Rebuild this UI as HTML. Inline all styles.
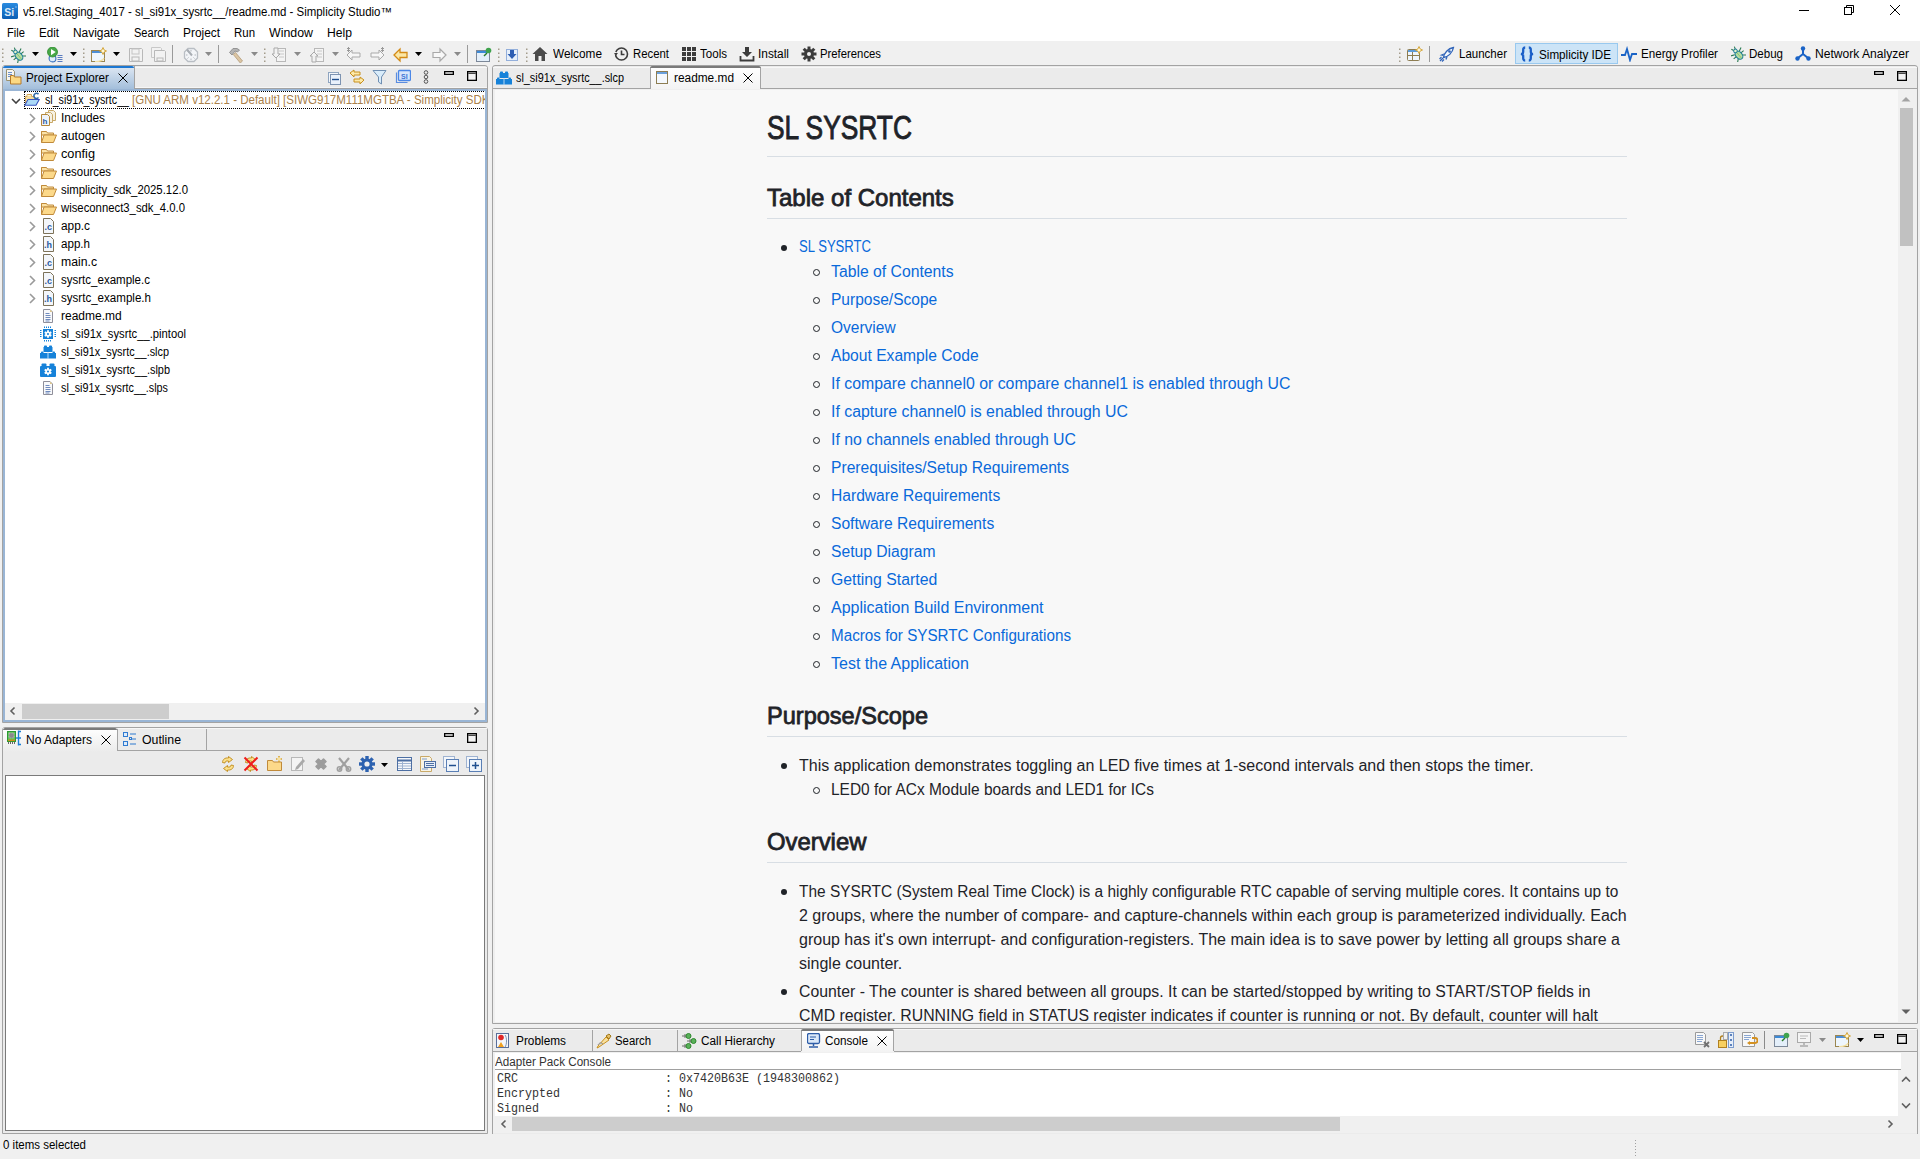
<!DOCTYPE html>
<html><head><meta charset="utf-8"><title>Simplicity Studio</title>
<style>
html,body{margin:0;padding:0}
body{width:1920px;height:1159px;overflow:hidden;background:#f0f0f0;position:relative;font-family:"Liberation Sans",sans-serif}
div,span,svg{position:absolute;box-sizing:border-box}
.t{white-space:pre;line-height:0;transform-origin:0 0}
.clip{overflow:hidden}
</style></head><body>
<div style="left:0px;top:0px;width:1920px;height:41px;background:#ffffff;"></div>
<svg style="left:2px;top:3px" width="16" height="16" viewBox="0 0 16 16"><defs><linearGradient id="sig" x1="0" y1="0" x2="0" y2="1"><stop offset="0" stop-color="#2a8be0"/><stop offset="1" stop-color="#0d5fb4"/></linearGradient></defs><rect x="0" y="0" width="16" height="16" rx="1.5" fill="url(#sig)"/><text x="2.2" y="13.2" font-size="10.5" font-family="Liberation Sans" font-weight="bold" fill="#dce9f6">Si</text><circle cx="14" cy="4" r=".8" fill="#8fc0ee"/></svg>
<span class="t" style="left:23px;top:12px;font-size:12px;font-family:'Liberation Sans',sans-serif;color:#000;transform:scaleX(0.9537);">v5.rel.Staging_4017 - sl_si91x_sysrtc__/readme.md - Simplicity Studio™</span>
<svg style="left:1799px;top:9px" width="11" height="3" viewBox="0 0 11 3"><rect width="10" height="1" y="1" fill="#000"/></svg>
<svg style="left:1844px;top:5px" width="12" height="12" viewBox="0 0 12 12"><rect x="0.5" y="2.5" width="7" height="7" fill="none" stroke="#000"/><path d="M2.5 2.5V0.5h7v7h-2" fill="none" stroke="#000"/></svg>
<svg style="left:1890px;top:5px" width="11" height="11" viewBox="0 0 11 11"><path d="M0 0l10 10M10 0 0 10" stroke="#000" stroke-width="1"/></svg>
<span class="t" style="left:7px;top:33px;font-size:12px;font-family:'Liberation Sans',sans-serif;color:#000;transform:scaleX(0.9305);">File</span>
<span class="t" style="left:39px;top:33px;font-size:12px;font-family:'Liberation Sans',sans-serif;color:#000;transform:scaleX(0.9669);">Edit</span>
<span class="t" style="left:73px;top:33px;font-size:12px;font-family:'Liberation Sans',sans-serif;color:#000;transform:scaleX(0.9921);">Navigate</span>
<span class="t" style="left:134px;top:33px;font-size:12px;font-family:'Liberation Sans',sans-serif;color:#000;transform:scaleX(0.9204);">Search</span>
<span class="t" style="left:183px;top:33px;font-size:12px;font-family:'Liberation Sans',sans-serif;color:#000;transform:scaleX(0.9905);">Project</span>
<span class="t" style="left:234px;top:33px;font-size:12px;font-family:'Liberation Sans',sans-serif;color:#000;transform:scaleX(0.9537);">Run</span>
<span class="t" style="left:269px;top:33px;font-size:12px;font-family:'Liberation Sans',sans-serif;color:#000;transform:scaleX(1.0307);">Window</span>
<span class="t" style="left:327px;top:33px;font-size:12px;font-family:'Liberation Sans',sans-serif;color:#000;transform:scaleX(1.0127);">Help</span>
<svg style="left:1px;top:47px" width="16" height="16" viewBox="0 0 16 16"><rect x="1" y="1.5" width="1.5" height="1.5" fill="#a39c8c"/><rect x="1" y="5.5" width="1.5" height="1.5" fill="#a39c8c"/><rect x="1" y="9.5" width="1.5" height="1.5" fill="#a39c8c"/><rect x="1" y="13.5" width="1.5" height="1.5" fill="#a39c8c"/></svg>
<svg style="left:10px;top:47px" width="16" height="16" viewBox="0 0 16 16"><g transform="rotate(-40 8 8)"><g stroke="#2a7a52" stroke-width="1.1" fill="none"><path d="M5 6.5 1.5 5M5 9 1.5 9M5.5 11.5 2.5 14M11 6.5l3.5-1.5M11 9h3.5M10.5 11.5l3 2.5M7 2.5 6 0M9 2.5l1-2.5"/></g><ellipse cx="8" cy="9.5" rx="3.2" ry="4.6" fill="#b7dca0" stroke="#1f7f9a" stroke-width="1.1"/><path d="M8 5.5v8" stroke="#7fbf70" stroke-width=".8"/><circle cx="8" cy="4" r="1.8" fill="#e8f4c8" stroke="#1f7f9a" stroke-width="1"/></g></svg>
<svg style="left:32px;top:52px" width="7" height="4" viewBox="0 0 7 4"><path d="M0 0h7l-3.5 4z" fill="#000"/></svg>
<svg style="left:47px;top:47px" width="16" height="16" viewBox="0 0 16 16"><circle cx="5.5" cy="11.5" r="3.4" fill="#e0eefa" stroke="#3b73c0" stroke-width="1.1"/><path d="M10.5 8.5h5M10.5 10.5h5M10.5 12.5h5M10.5 14.5h5" stroke="#5a7cc0" stroke-width="1"/><circle cx="5.5" cy="5" r="5" fill="#47a847" stroke="#2e8a2e" stroke-width=".8"/><path d="M4 2v6.2l4.7-3.1z" fill="#fff"/></svg>
<svg style="left:70px;top:52px" width="7" height="4" viewBox="0 0 7 4"><path d="M0 0h7l-3.5 4z" fill="#000"/></svg>
<svg style="left:82px;top:47px" width="16" height="16" viewBox="0 0 16 16"><rect x="1" y="1.5" width="1.5" height="1.5" fill="#a39c8c"/><rect x="1" y="5.5" width="1.5" height="1.5" fill="#a39c8c"/><rect x="1" y="9.5" width="1.5" height="1.5" fill="#a39c8c"/><rect x="1" y="13.5" width="1.5" height="1.5" fill="#a39c8c"/></svg>
<svg style="left:91px;top:47px" width="16" height="16" viewBox="0 0 16 16"><rect x="0.5" y="3.5" width="13" height="11" fill="#eef6fd" stroke="#9b8650"/><rect x="1" y="4" width="12" height="2" fill="#4d8fd6"/><path d="M13 11c-1 3-5 3.5-9 3.5" fill="none" stroke="#f3dfa0" stroke-width="1.2"/><path d="M12 0.5 13.2 3 15.5 4 13.2 5 12 7.5 10.8 5 8.5 4 10.8 3z" fill="#fff8d8" stroke="#d3a02e" stroke-width=".9"/></svg>
<svg style="left:113px;top:52px" width="7" height="4" viewBox="0 0 7 4"><path d="M0 0h7l-3.5 4z" fill="#000"/></svg>
<svg style="left:128px;top:47px" width="16" height="16" viewBox="0 0 16 16"><path d="M1.5 1.5h12l1 1v12h-13z" fill="#f2f2f2" stroke="#b8b8b8"/><rect x="4" y="2" width="7" height="5" fill="none" stroke="#c4c4c4"/><rect x="4" y="10" width="7" height="4" fill="none" stroke="#b8b8b8"/></svg>
<svg style="left:151px;top:47px" width="16" height="16" viewBox="0 0 16 16"><path d="M0.5 0.5h9l1 1v9h-10z" fill="#f2f2f2" stroke="#c8c8c8"/><path d="M3.5 3.5h10l1 1v10h-11z" fill="#f2f2f2" stroke="#b8b8b8"/><rect x="6" y="11" width="6" height="3" fill="none" stroke="#b8b8b8"/></svg>
<div style="left:172px;top:45px;width:1px;height:18px;background:#9a9a9a;"></div>
<svg style="left:183px;top:47px" width="16" height="16" viewBox="0 0 16 16"><path d="M5 1.5h6l3.5 3.5v6L11 14.5H5L1.5 11V5z" fill="#f3f5f8" stroke="#b9bec4" stroke-width="1.3"/><path d="M8 3v1.5M8 11.5V13M3 8h1.5M11.5 8H13M4.5 4.5l1 1M11.5 11.5l-1-1M4.5 11.5l1-1" stroke="#b0b5bb"/><path d="M4 2.5 9 8.5" stroke="#a9aeb4" stroke-width="2"/></svg>
<svg style="left:205px;top:52px" width="7" height="4" viewBox="0 0 7 4"><path d="M0 0h7l-3.5 4z" fill="#8a8a8a"/></svg>
<div style="left:218px;top:45px;width:1px;height:18px;background:#9a9a9a;"></div>
<svg style="left:228px;top:47px" width="16" height="16" viewBox="0 0 16 16"><path d="M1.5 5.5 5 1.5h4l2.5 1.5-2 2L7 4 4 8z" fill="#b4b4b4" stroke="#8c8c8c" stroke-width=".9"/><path d="M7.5 5.5l7 8.5-2.2 2-7-8.5z" fill="#dcc6a4" stroke="#b39a78" stroke-width=".8"/></svg>
<svg style="left:251px;top:52px" width="7" height="4" viewBox="0 0 7 4"><path d="M0 0h7l-3.5 4z" fill="#8a8a8a"/></svg>
<svg style="left:263px;top:47px" width="16" height="16" viewBox="0 0 16 16"><rect x="1" y="1.5" width="1.5" height="1.5" fill="#a39c8c"/><rect x="1" y="5.5" width="1.5" height="1.5" fill="#a39c8c"/><rect x="1" y="9.5" width="1.5" height="1.5" fill="#a39c8c"/><rect x="1" y="13.5" width="1.5" height="1.5" fill="#a39c8c"/></svg>
<svg style="left:271px;top:47px" width="16" height="16" viewBox="0 0 16 16"><rect x="5.5" y="1.5" width="9" height="13" fill="#f4f4f4" stroke="#b8b8b8"/><path d="M8 4h5M8 7h5M8 10h5" stroke="#c8c8c8"/><path d="M3 1v6H1l4 4 4-4H7V1z" fill="#f2f2f2" stroke="#a9a9a9"/></svg>
<svg style="left:294px;top:52px" width="7" height="4" viewBox="0 0 7 4"><path d="M0 0h7l-3.5 4z" fill="#8a8a8a"/></svg>
<svg style="left:309px;top:47px" width="16" height="16" viewBox="0 0 16 16"><rect x="5.5" y="1.5" width="9" height="13" fill="#f4f4f4" stroke="#b8b8b8"/><path d="M8 4h5M8 7h5M8 10h5" stroke="#c8c8c8"/><path d="M3 15V9H1l4-4 4 4H7v6z" fill="#f2f2f2" stroke="#a9a9a9"/></svg>
<svg style="left:332px;top:52px" width="7" height="4" viewBox="0 0 7 4"><path d="M0 0h7l-3.5 4z" fill="#8a8a8a"/></svg>
<svg style="left:346px;top:47px" width="16" height="16" viewBox="0 0 16 16"><path d="M1 8l5-5v3h8v4H6v3z" fill="#f6f6f6" stroke="#a9a9a9"/><path d="M1 1l3 3M1 4l3-3M2.5 0v5" stroke="#999"/></svg>
<svg style="left:369px;top:47px" width="16" height="16" viewBox="0 0 16 16"><path d="M15 8l-5-5v3H2v4h8v3z" fill="#f6f6f6" stroke="#a9a9a9"/><path d="M12 1l3 3M12 4l3-3M13.5 0v5" stroke="#999"/></svg>
<svg style="left:393px;top:47px" width="16" height="16" viewBox="0 0 16 16"><path d="M1 8l6-6v3.5h7v5H7V14z" fill="#fbe7a6" stroke="#d38a16" stroke-width="1.3"/></svg>
<svg style="left:415px;top:52px" width="7" height="4" viewBox="0 0 7 4"><path d="M0 0h7l-3.5 4z" fill="#000"/></svg>
<svg style="left:431px;top:47px" width="16" height="16" viewBox="0 0 16 16"><path d="M15 8l-6-6v3.5H2v5h7V14z" fill="#f8f8f8" stroke="#a9a9a9" stroke-width="1.2"/></svg>
<svg style="left:454px;top:52px" width="7" height="4" viewBox="0 0 7 4"><path d="M0 0h7l-3.5 4z" fill="#8a8a8a"/></svg>
<div style="left:467px;top:45px;width:1px;height:18px;background:#9a9a9a;"></div>
<svg style="left:476px;top:47px" width="16" height="16" viewBox="0 0 16 16"><rect x="0.5" y="3.5" width="13" height="11" fill="#e4effa" stroke="#7c8899"/><rect x="1" y="4" width="12" height="2" fill="#3c8ad6"/><path d="M8 9l3-3" stroke="#2a7a2a" stroke-width="1.5"/><circle cx="12.5" cy="3.5" r="2.8" fill="#3fa34d"/></svg>
<svg style="left:497px;top:47px" width="16" height="16" viewBox="0 0 16 16"><rect x="1" y="1.5" width="1.5" height="1.5" fill="#a39c8c"/><rect x="1" y="5.5" width="1.5" height="1.5" fill="#a39c8c"/><rect x="1" y="9.5" width="1.5" height="1.5" fill="#a39c8c"/><rect x="1" y="13.5" width="1.5" height="1.5" fill="#a39c8c"/></svg>
<svg style="left:504px;top:47px" width="16" height="16" viewBox="0 0 16 16"><rect x="2.5" y="2.5" width="11" height="11" fill="#e6effa" stroke="#3b6fc0" stroke-dasharray="1 1"/><path d="M6 3h4v4h2.5L8 12 3.5 7H6z" fill="#2f5fb3"/></svg>
<svg style="left:525px;top:47px" width="16" height="16" viewBox="0 0 16 16"><rect x="1" y="1.5" width="1.5" height="1.5" fill="#a39c8c"/><rect x="1" y="5.5" width="1.5" height="1.5" fill="#a39c8c"/><rect x="1" y="9.5" width="1.5" height="1.5" fill="#a39c8c"/><rect x="1" y="13.5" width="1.5" height="1.5" fill="#a39c8c"/></svg>
<svg style="left:532px;top:46px" width="16" height="16" viewBox="0 0 16 16"><path d="M8 1 0.5 8H3v7h3.5v-5h3v5H13V8h2.5z" fill="#4a4a4a"/></svg>
<span class="t" style="left:553px;top:54px;font-size:12px;font-family:'Liberation Sans',sans-serif;color:#000;transform:scaleX(0.9838);">Welcome</span>
<svg style="left:613px;top:46px" width="16" height="16" viewBox="0 0 16 16"><circle cx="8.5" cy="8" r="6" fill="none" stroke="#3c3c3c" stroke-width="1.6"/><path d="M8.5 4.5V8.5h3" fill="none" stroke="#3c3c3c" stroke-width="1.6"/><path d="M0 6h4l-2 3z" fill="#f0f0f0"/><path d="M1 7l2 2.5L5 7z" fill="#3c3c3c"/></svg>
<span class="t" style="left:633px;top:54px;font-size:12px;font-family:'Liberation Sans',sans-serif;color:#000;transform:scaleX(0.9466);">Recent</span>
<svg style="left:681px;top:46px" width="16" height="16" viewBox="0 0 16 16"><rect x="1" y="1" width="4" height="4" fill="#3c3c3c"/><rect x="6" y="1" width="4" height="4" fill="#3c3c3c"/><rect x="11" y="1" width="4" height="4" fill="#3c3c3c"/><rect x="1" y="6" width="4" height="4" fill="#3c3c3c"/><rect x="6" y="6" width="4" height="4" fill="#3c3c3c"/><rect x="11" y="6" width="4" height="4" fill="#3c3c3c"/><rect x="1" y="11" width="4" height="4" fill="#3c3c3c"/><rect x="6" y="11" width="4" height="4" fill="#3c3c3c"/><rect x="11" y="11" width="4" height="4" fill="#3c3c3c"/></svg>
<span class="t" style="left:700px;top:54px;font-size:12px;font-family:'Liberation Sans',sans-serif;color:#000;transform:scaleX(0.9635);">Tools</span>
<svg style="left:739px;top:46px" width="16" height="16" viewBox="0 0 16 16"><path d="M6 1h4v5h3l-5 5-5-5h3z" fill="#3c3c3c"/><path d="M1.5 10v4.5h13V10" fill="none" stroke="#3c3c3c" stroke-width="1.8"/></svg>
<span class="t" style="left:758px;top:54px;font-size:12px;font-family:'Liberation Sans',sans-serif;color:#000;transform:scaleX(0.9885);">Install</span>
<svg style="left:801px;top:46px" width="16" height="16" viewBox="0 0 16 16"><g fill="#3c3c3c"><circle cx="8" cy="8" r="5"/><rect x="6.5" y="0.5" width="3" height="4" transform="rotate(0 8 8)"/><rect x="6.5" y="0.5" width="3" height="4" transform="rotate(45 8 8)"/><rect x="6.5" y="0.5" width="3" height="4" transform="rotate(90 8 8)"/><rect x="6.5" y="0.5" width="3" height="4" transform="rotate(135 8 8)"/><rect x="6.5" y="0.5" width="3" height="4" transform="rotate(180 8 8)"/><rect x="6.5" y="0.5" width="3" height="4" transform="rotate(225 8 8)"/><rect x="6.5" y="0.5" width="3" height="4" transform="rotate(270 8 8)"/><rect x="6.5" y="0.5" width="3" height="4" transform="rotate(315 8 8)"/></g><circle cx="8" cy="8" r="2" fill="#f0f0f0"/></svg>
<span class="t" style="left:820px;top:54px;font-size:12px;font-family:'Liberation Sans',sans-serif;color:#000;transform:scaleX(0.9427);">Preferences</span>
<svg style="left:1398px;top:47px" width="16" height="16" viewBox="0 0 16 16"><rect x="1" y="1.5" width="1.5" height="1.5" fill="#a39c8c"/><rect x="1" y="5.5" width="1.5" height="1.5" fill="#a39c8c"/><rect x="1" y="9.5" width="1.5" height="1.5" fill="#a39c8c"/><rect x="1" y="13.5" width="1.5" height="1.5" fill="#a39c8c"/></svg>
<svg style="left:1407px;top:46px" width="16" height="16" viewBox="0 0 16 16"><rect x="0.5" y="3.5" width="12" height="11" rx="1" fill="#eef5fc" stroke="#8d7d52"/><rect x="1" y="4" width="11" height="2" fill="#5b9ad8"/><path d="M1 9.5h11M5.5 6v8" stroke="#8d7d52"/><path d="M12 0.5 13.2 3 15.5 4 13.2 5 12 7.5 10.8 5 8.5 4 10.8 3z" fill="#fff8d8" stroke="#d3a02e" stroke-width=".9"/></svg>
<div style="left:1429px;top:46px;width:1px;height:16px;background:#9a9a9a;"></div>
<svg style="left:1439px;top:46px" width="16" height="16" viewBox="0 0 16 16"><path d="M4.5 11.5C5 7 9 2.5 14.5 1.5 13.5 7 9 11 4.5 11.5z" fill="#f2f7fd" stroke="#2f63b8" stroke-width="1.3"/><circle cx="10.5" cy="5.5" r="1.3" fill="#2f63b8"/><path d="M5 8 2.5 9l2 .5M8 11l-1 2.5.5-2M1 15l3-3M3 15.5l2-2M.5 13l2-2" stroke="#2f63b8" stroke-width="1.2" fill="none"/></svg>
<span class="t" style="left:1459px;top:54px;font-size:12px;font-family:'Liberation Sans',sans-serif;color:#000;transform:scaleX(0.9590);">Launcher</span>
<div style="left:1515px;top:43px;width:103px;height:21px;background:#cce4f7;box-sizing:border-box;border:1px solid #99c9ef;"></div>
<svg style="left:1519px;top:46px" width="16" height="16" viewBox="0 0 16 16"><path d="M6.2 1.5C3.8 1.5 4.2 3.5 4.2 6S2 8 2 8s2.2 0 2.2 2-.4 4.5 2 4.5M9.8 1.5c2.4 0 2 2 2 4.5S14 8 14 8s-2.2 0-2.2 2 .4 4.5-2 4.5" fill="none" stroke="#1a5fc8" stroke-width="2.3"/></svg>
<span class="t" style="left:1539px;top:55px;font-size:12px;font-family:'Liberation Sans',sans-serif;color:#000;transform:scaleX(0.9726);">Simplicity IDE</span>
<svg style="left:1621px;top:46px" width="16" height="16" viewBox="0 0 16 16"><path d="M0 9h4l2-6 3 11 2-6h5" fill="none" stroke="#1a63c6" stroke-width="1.8"/></svg>
<span class="t" style="left:1641px;top:54px;font-size:12px;font-family:'Liberation Sans',sans-serif;color:#000;transform:scaleX(0.9700);">Energy Profiler</span>
<svg style="left:1730px;top:46px" width="16" height="16" viewBox="0 0 16 16"><g transform="rotate(-40 8 8)"><g stroke="#2a7a52" stroke-width="1.1" fill="none"><path d="M5 6.5 1.5 5M5 9 1.5 9M5.5 11.5 2.5 14M11 6.5l3.5-1.5M11 9h3.5M10.5 11.5l3 2.5M7 2.5 6 0M9 2.5l1-2.5"/></g><ellipse cx="8" cy="9.5" rx="3.2" ry="4.6" fill="#b7dca0" stroke="#1f7f9a" stroke-width="1.1"/><path d="M8 5.5v8" stroke="#7fbf70" stroke-width=".8"/><circle cx="8" cy="4" r="1.8" fill="#e8f4c8" stroke="#1f7f9a" stroke-width="1"/></g></svg>
<span class="t" style="left:1749px;top:54px;font-size:12px;font-family:'Liberation Sans',sans-serif;color:#000;transform:scaleX(0.9612);">Debug</span>
<svg style="left:1795px;top:46px" width="16" height="16" viewBox="0 0 16 16"><path d="M8 8V3M8 8l-5 4M8 8l5 4" stroke="#1a63c6" stroke-width="2"/><circle cx="8" cy="2.5" r="2.2" fill="#1a63c6"/><circle cx="2.5" cy="12.5" r="2.2" fill="#1a63c6"/><circle cx="13.5" cy="12.5" r="2.2" fill="#1a63c6"/></svg>
<span class="t" style="left:1815px;top:54px;font-size:12px;font-family:'Liberation Sans',sans-serif;color:#000;transform:scaleX(1.0065);">Network Analyzer</span>
<div style="left:2px;top:65px;width:486px;height:658px;background:#ebebeb;border:1px solid #a3a3a3;border-radius:3px 3px 0 0;"></div>
<div style="left:3px;top:88px;width:484px;height:1px;background:#a3a3a3;"></div>
<div style="left:135px;top:67px;width:352px;height:1px;background:#f7f7f7;"></div>
<div style="left:135px;top:87px;width:352px;height:1px;background:#f6f6f6;"></div>
<div style="left:3px;top:66px;width:131px;height:25px;background:linear-gradient(#dfe8f3,#9ebbd9);"></div>
<div style="left:3px;top:66px;width:131px;height:2px;background:#1d78d2;border-radius:2px 2px 0 0;"></div>
<div style="left:134px;top:66px;width:1px;height:23px;background:#a3a3a3;"></div>
<svg style="left:6px;top:69px" width="16" height="16" viewBox="0 0 16 16"><path d="M0.5 0.5h6l2 2v9h-8z" fill="#f7f5ee" stroke="#9a9270"/><path d="M2 3.5h4M2 5.5h4M2 7.5h3" stroke="#5c86c9" stroke-width=".9"/><path d="M4.5 6.5h3l1 1.5h6.5v7h-10.5z" fill="#fcd983" stroke="#b57b2c"/></svg>
<span class="t" style="left:26px;top:78px;font-size:12px;font-family:'Liberation Sans',sans-serif;color:#000;transform:scaleX(0.9721);">Project Explorer</span>
<svg style="left:118px;top:73px" width="10" height="10" viewBox="0 0 10 10"><path d="M0.5 0.5L9.5 9.5M9.5 0.5L0.5 9.5" stroke="#000" stroke-width="1"/></svg>
<svg style="left:327px;top:71px" width="16" height="16" viewBox="0 0 16 16"><rect x="1.5" y="1.5" width="10" height="10" fill="#f3f6fa" stroke="#8fa5c0"/><rect x="3.5" y="3.5" width="10" height="10" fill="#e9f1fb" stroke="#7d93b1"/><path d="M5 8.5h7" stroke="#1f4f8f" stroke-width="1.4"/></svg>
<svg style="left:349px;top:69px" width="16" height="16" viewBox="0 0 16 16"><path d="M1 4l4-3v2h6v3H5v2z" fill="#fde9a8" stroke="#c8901e"/><path d="M15 11l-4-3v2H5v3h6v2z" fill="#fde9a8" stroke="#c8901e"/></svg>
<svg style="left:372px;top:69px" width="16" height="16" viewBox="0 0 16 16"><path d="M1 1.5h13L9.5 8v7l-3-2V8z" fill="#d9ecfa" stroke="#6f8fb3"/></svg>
<svg style="left:395px;top:69px" width="16" height="16" viewBox="0 0 16 16"><path d="M1.5 3.5v10h11" fill="none" stroke="#5b8de0" stroke-width="1.2"/><rect x="3.5" y="1.5" width="12" height="10" rx="1" fill="#d7e6fb" stroke="#4b87e6" stroke-width="1.3"/><text x="6" y="10" font-size="7" font-family="Liberation Sans" font-weight="bold" fill="#3b77d6">SI</text></svg>
<svg style="left:423px;top:70px" width="16" height="16" viewBox="0 0 16 16"><circle cx="3" cy="2.5" r="1.8" fill="none" stroke="#555"/><circle cx="3" cy="7" r="1.8" fill="none" stroke="#555"/><circle cx="3" cy="11.5" r="1.8" fill="none" stroke="#555"/></svg>
<svg style="left:444px;top:71px" width="11" height="5" viewBox="0 0 11 5"><rect x="0.65" y="0.65" width="8.7" height="2.7" fill="#fff" stroke="#000" stroke-width="1.3"/></svg>
<svg style="left:467px;top:71px" width="11" height="11" viewBox="0 0 11 11"><rect x="0.65" y="0.65" width="8.7" height="8.7" fill="#f2f2f2" stroke="#000" stroke-width="1.3"/><path d="M1.3 2.3h7.4" stroke="#000" stroke-width=".9"/></svg>
<div style="left:3px;top:89px;width:484px;height:633px;background:#99b5d5;"></div>
<div style="left:5px;top:91px;width:480px;height:629px;background:#ffffff;"></div>
<div style="left:5px;top:703px;width:480px;height:17px;background:#f0f0f0;"></div>
<div style="left:22px;top:704px;width:147px;height:15px;background:#cdcdcd;"></div>
<svg style="left:9px;top:706px" width="8" height="10" viewBox="0 0 8 10"><path d="M5.5 1.5 2 5l3.5 3.5" fill="none" stroke="#606060" stroke-width="1.6"/></svg>
<svg style="left:472px;top:706px" width="8" height="10" viewBox="0 0 8 10"><path d="M2.5 1.5 6 5 2.5 8.5" fill="none" stroke="#606060" stroke-width="1.6"/></svg>
<div class="clip" style="left:5px;top:91px;width:480px;height:612px">
<div style="left:19px;top:0px;width:462px;height:18px;border:1px dotted #000"></div>
<svg style="left:6px;top:7px" width="10" height="6" viewBox="0 0 10 6"><path d="M1 1l4 4 4-4" fill="none" stroke="#404040" stroke-width="1.6"/></svg>
<svg style="left:19px;top:1px" width="16" height="16" viewBox="0 0 16 16"><path d="M1.5 12V4.5h1.5V2.5h4.5v2h3v3" fill="#f6dd9e" stroke="#d3a95e" stroke-width="1"/><rect x="3.5" y="3" width="3" height="1" fill="#fff6dc"/><path d="M0.8 13.2 4 7.5h11.2l-3.2 5.7z" fill="#aad9f7" stroke="#3a55c0" stroke-width="1.1"/><path d="M14.5 2.2a2.6 2.6 0 1 0 0 3.4" fill="none" stroke="#2d6aa8" stroke-width="1.6"/></svg>
<span class="t" style="left:40px;top:9px;font-size:12px;font-family:'Liberation Sans',sans-serif;color:#000;transform:scaleX(0.8868);">sl_si91x_sysrtc__</span>
<span class="t" style="left:127px;top:9px;font-size:12px;font-family:'Liberation Sans',sans-serif;color:#a9804a;transform:scaleX(0.9600);">[GNU ARM v12.2.1 - Default] [SIWG917M111MGTBA - Simplicity SDK Suite v2025.12.0]</span>
<svg style="left:24px;top:22px" width="7" height="11" viewBox="0 0 7 11"><path d="M1 1l4.5 4.5L1 10" fill="none" stroke="#9a9a9a" stroke-width="1.6"/></svg>
<svg style="left:36px;top:19px" width="16" height="16" viewBox="0 0 16 16"><path d="M7.5 0.5h5l2 2v8h-7z" fill="#f6f1e3" stroke="#c9a968"/><path d="M4.5 2.5h5l2 2v8h-7z" fill="#f6f1e3" stroke="#c9a968"/><path d="M0.5 4.5h6l2 2v9h-8z" fill="#eef3fa" stroke="#b3873a"/><text x="1.5" y="14" font-size="8" font-family="Liberation Sans" font-weight="bold" fill="#2a5aa0">h</text></svg>
<span class="t" style="left:56px;top:27px;font-size:12px;font-family:'Liberation Sans',sans-serif;color:#000;transform:scaleX(0.9842);">Includes</span>
<svg style="left:24px;top:40px" width="7" height="11" viewBox="0 0 7 11"><path d="M1 1l4.5 4.5L1 10" fill="none" stroke="#9a9a9a" stroke-width="1.6"/></svg>
<svg style="left:36px;top:37px" width="16" height="16" viewBox="0 0 16 16"><path d="M0.5 3.5h5l1 1.5h6v2h-12z" fill="#fbe3a8" stroke="#c08a3a"/><path d="M0.5 14.5l2.5-7.5h12.5l-3 7.5z" fill="#fcd98a" stroke="#c08a3a"/><path d="M0.5 3.5v11" stroke="#c08a3a"/></svg>
<span class="t" style="left:56px;top:45px;font-size:12px;font-family:'Liberation Sans',sans-serif;color:#000;transform:scaleX(1.0140);">autogen</span>
<svg style="left:24px;top:58px" width="7" height="11" viewBox="0 0 7 11"><path d="M1 1l4.5 4.5L1 10" fill="none" stroke="#9a9a9a" stroke-width="1.6"/></svg>
<svg style="left:36px;top:55px" width="16" height="16" viewBox="0 0 16 16"><path d="M0.5 3.5h5l1 1.5h6v2h-12z" fill="#fbe3a8" stroke="#c08a3a"/><path d="M0.5 14.5l2.5-7.5h12.5l-3 7.5z" fill="#fcd98a" stroke="#c08a3a"/><path d="M0.5 3.5v11" stroke="#c08a3a"/></svg>
<span class="t" style="left:56px;top:63px;font-size:12px;font-family:'Liberation Sans',sans-serif;color:#000;transform:scaleX(1.0615);">config</span>
<svg style="left:24px;top:76px" width="7" height="11" viewBox="0 0 7 11"><path d="M1 1l4.5 4.5L1 10" fill="none" stroke="#9a9a9a" stroke-width="1.6"/></svg>
<svg style="left:36px;top:73px" width="16" height="16" viewBox="0 0 16 16"><path d="M0.5 3.5h5l1 1.5h6v2h-12z" fill="#fbe3a8" stroke="#c08a3a"/><path d="M0.5 14.5l2.5-7.5h12.5l-3 7.5z" fill="#fcd98a" stroke="#c08a3a"/><path d="M0.5 3.5v11" stroke="#c08a3a"/></svg>
<span class="t" style="left:56px;top:81px;font-size:12px;font-family:'Liberation Sans',sans-serif;color:#000;transform:scaleX(0.9489);">resources</span>
<svg style="left:24px;top:94px" width="7" height="11" viewBox="0 0 7 11"><path d="M1 1l4.5 4.5L1 10" fill="none" stroke="#9a9a9a" stroke-width="1.6"/></svg>
<svg style="left:36px;top:91px" width="16" height="16" viewBox="0 0 16 16"><path d="M0.5 3.5h5l1 1.5h6v2h-12z" fill="#fbe3a8" stroke="#c08a3a"/><path d="M0.5 14.5l2.5-7.5h12.5l-3 7.5z" fill="#fcd98a" stroke="#c08a3a"/><path d="M0.5 3.5v11" stroke="#c08a3a"/></svg>
<span class="t" style="left:56px;top:99px;font-size:12px;font-family:'Liberation Sans',sans-serif;color:#000;transform:scaleX(0.9470);">simplicity_sdk_2025.12.0</span>
<svg style="left:24px;top:112px" width="7" height="11" viewBox="0 0 7 11"><path d="M1 1l4.5 4.5L1 10" fill="none" stroke="#9a9a9a" stroke-width="1.6"/></svg>
<svg style="left:36px;top:109px" width="16" height="16" viewBox="0 0 16 16"><path d="M0.5 3.5h5l1 1.5h6v2h-12z" fill="#fbe3a8" stroke="#c08a3a"/><path d="M0.5 14.5l2.5-7.5h12.5l-3 7.5z" fill="#fcd98a" stroke="#c08a3a"/><path d="M0.5 3.5v11" stroke="#c08a3a"/></svg>
<span class="t" style="left:56px;top:117px;font-size:12px;font-family:'Liberation Sans',sans-serif;color:#000;transform:scaleX(0.9433);">wiseconnect3_sdk_4.0.0</span>
<svg style="left:24px;top:130px" width="7" height="11" viewBox="0 0 7 11"><path d="M1 1l4.5 4.5L1 10" fill="none" stroke="#9a9a9a" stroke-width="1.6"/></svg>
<svg style="left:36px;top:127px" width="16" height="16" viewBox="0 0 16 16"><path d="M2.5 0.5h7l3 3v12h-10z" fill="#f3f6fa" stroke="#7d7258"/><text x="3.5" y="12" font-size="9" font-family="Liberation Sans" font-weight="bold" fill="#2a5aa0">.c</text></svg>
<span class="t" style="left:56px;top:135px;font-size:12px;font-family:'Liberation Sans',sans-serif;color:#000;transform:scaleX(0.9876);">app.c</span>
<svg style="left:24px;top:148px" width="7" height="11" viewBox="0 0 7 11"><path d="M1 1l4.5 4.5L1 10" fill="none" stroke="#9a9a9a" stroke-width="1.6"/></svg>
<svg style="left:36px;top:145px" width="16" height="16" viewBox="0 0 16 16"><path d="M2.5 0.5h7l3 3v12h-10z" fill="#f3f6fa" stroke="#7d7258"/><text x="3" y="12" font-size="9" font-family="Liberation Sans" font-weight="bold" fill="#2a5aa0">.h</text></svg>
<span class="t" style="left:56px;top:153px;font-size:12px;font-family:'Liberation Sans',sans-serif;color:#000;transform:scaleX(0.9654);">app.h</span>
<svg style="left:24px;top:166px" width="7" height="11" viewBox="0 0 7 11"><path d="M1 1l4.5 4.5L1 10" fill="none" stroke="#9a9a9a" stroke-width="1.6"/></svg>
<svg style="left:36px;top:163px" width="16" height="16" viewBox="0 0 16 16"><path d="M2.5 0.5h7l3 3v12h-10z" fill="#f3f6fa" stroke="#7d7258"/><text x="3.5" y="12" font-size="9" font-family="Liberation Sans" font-weight="bold" fill="#2a5aa0">.c</text></svg>
<span class="t" style="left:56px;top:171px;font-size:12px;font-family:'Liberation Sans',sans-serif;color:#000;transform:scaleX(1.0183);">main.c</span>
<svg style="left:24px;top:184px" width="7" height="11" viewBox="0 0 7 11"><path d="M1 1l4.5 4.5L1 10" fill="none" stroke="#9a9a9a" stroke-width="1.6"/></svg>
<svg style="left:36px;top:181px" width="16" height="16" viewBox="0 0 16 16"><path d="M2.5 0.5h7l3 3v12h-10z" fill="#f3f6fa" stroke="#7d7258"/><text x="3.5" y="12" font-size="9" font-family="Liberation Sans" font-weight="bold" fill="#2a5aa0">.c</text></svg>
<span class="t" style="left:56px;top:189px;font-size:12px;font-family:'Liberation Sans',sans-serif;color:#000;transform:scaleX(0.9600);">sysrtc_example.c</span>
<svg style="left:24px;top:202px" width="7" height="11" viewBox="0 0 7 11"><path d="M1 1l4.5 4.5L1 10" fill="none" stroke="#9a9a9a" stroke-width="1.6"/></svg>
<svg style="left:36px;top:199px" width="16" height="16" viewBox="0 0 16 16"><path d="M2.5 0.5h7l3 3v12h-10z" fill="#f3f6fa" stroke="#7d7258"/><text x="3" y="12" font-size="9" font-family="Liberation Sans" font-weight="bold" fill="#2a5aa0">.h</text></svg>
<span class="t" style="left:56px;top:207px;font-size:12px;font-family:'Liberation Sans',sans-serif;color:#000;transform:scaleX(0.9637);">sysrtc_example.h</span>
<svg style="left:36px;top:217px" width="16" height="16" viewBox="0 0 16 16"><path d="M2.5 1.5h6.5l2.5 2.5v10.5h-9z" fill="#f8f9fb" stroke="#8f8f9a" stroke-width="1"/><path d="M9 1.5v2.5h2.5z" fill="#dcc58e"/><path d="M4.5 5.5h4M4.5 7.5h5M4.5 9.5h5M4.5 11.5h5M4.5 13h4" stroke="#4d6fae" stroke-width=".8"/></svg>
<span class="t" style="left:56px;top:225px;font-size:12px;font-family:'Liberation Sans',sans-serif;color:#000;">readme.md</span>
<svg style="left:35px;top:235px" width="16" height="16" viewBox="0 0 16 16"><rect x="3" y="3" width="10" height="10" fill="#1682d9"/><circle cx="8" cy="8" r="2.6" fill="#fff"/><rect x="7.1" y="4.2" width="1.8" height="2" fill="#fff" transform="rotate(0 8 8)"/><rect x="7.1" y="4.2" width="1.8" height="2" fill="#fff" transform="rotate(60 8 8)"/><rect x="7.1" y="4.2" width="1.8" height="2" fill="#fff" transform="rotate(120 8 8)"/><rect x="7.1" y="4.2" width="1.8" height="2" fill="#fff" transform="rotate(180 8 8)"/><rect x="7.1" y="4.2" width="1.8" height="2" fill="#fff" transform="rotate(240 8 8)"/><rect x="7.1" y="4.2" width="1.8" height="2" fill="#fff" transform="rotate(300 8 8)"/><circle cx="8" cy="8" r="1.04" fill="#1682d9"/><rect x="4" y="0.5" width="1" height="1.5" fill="#1682d9"/><rect x="4" y="14" width="1" height="1.5" fill="#1682d9"/><rect x="0" y="4" width="1.5" height="1" fill="#1682d9"/><rect x="14.5" y="4" width="1.5" height="1" fill="#1682d9"/><rect x="6" y="0.5" width="1" height="1.5" fill="#1682d9"/><rect x="6" y="14" width="1" height="1.5" fill="#1682d9"/><rect x="0" y="6" width="1.5" height="1" fill="#1682d9"/><rect x="14.5" y="6" width="1.5" height="1" fill="#1682d9"/><rect x="8" y="0.5" width="1" height="1.5" fill="#1682d9"/><rect x="8" y="14" width="1" height="1.5" fill="#1682d9"/><rect x="0" y="8" width="1.5" height="1" fill="#1682d9"/><rect x="14.5" y="8" width="1.5" height="1" fill="#1682d9"/><rect x="10" y="0.5" width="1" height="1.5" fill="#1682d9"/><rect x="10" y="14" width="1" height="1.5" fill="#1682d9"/><rect x="0" y="10" width="1.5" height="1" fill="#1682d9"/><rect x="14.5" y="10" width="1.5" height="1" fill="#1682d9"/></svg>
<span class="t" style="left:56px;top:243px;font-size:12px;font-family:'Liberation Sans',sans-serif;color:#000;transform:scaleX(0.9368);">sl_si91x_sysrtc__.pintool</span>
<svg style="left:35px;top:253px" width="16" height="16" viewBox="0 0 16 16"><g fill="#1682d9"><rect x="4" y="1.5" width="3" height="2" rx=".8"/><rect x="9" y="1.5" width="3" height="2" rx=".8"/><rect x="3.5" y="3" width="9" height="5"/><rect x="1" y="7.5" width="2.5" height="2" rx=".8"/><rect x="12.5" y="7.5" width="2.5" height="2" rx=".8"/><rect x="0" y="9" width="7.7" height="5.5"/><rect x="8.3" y="9" width="7.7" height="5.5"/></g><path d="M8 8.5v6" stroke="#7fbdf0" stroke-width=".8"/></svg>
<span class="t" style="left:56px;top:261px;font-size:12px;font-family:'Liberation Sans',sans-serif;color:#000;transform:scaleX(0.9045);">sl_si91x_sysrtc__.slcp</span>
<svg style="left:35px;top:271px" width="16" height="16" viewBox="0 0 16 16"><rect x="0" y="4" width="16" height="11" rx="1" fill="#1682d9"/><rect x="1.5" y="1.5" width="5" height="3" rx="1" fill="#1682d9"/><rect x="9.5" y="1.5" width="5" height="3" rx="1" fill="#1682d9"/><circle cx="8" cy="9.5" r="2.6" fill="#fff"/><rect x="7.1" y="5.7" width="1.8" height="2" fill="#fff" transform="rotate(0 8 9.5)"/><rect x="7.1" y="5.7" width="1.8" height="2" fill="#fff" transform="rotate(60 8 9.5)"/><rect x="7.1" y="5.7" width="1.8" height="2" fill="#fff" transform="rotate(120 8 9.5)"/><rect x="7.1" y="5.7" width="1.8" height="2" fill="#fff" transform="rotate(180 8 9.5)"/><rect x="7.1" y="5.7" width="1.8" height="2" fill="#fff" transform="rotate(240 8 9.5)"/><rect x="7.1" y="5.7" width="1.8" height="2" fill="#fff" transform="rotate(300 8 9.5)"/><circle cx="8" cy="9.5" r="1.04" fill="#1682d9"/></svg>
<span class="t" style="left:56px;top:279px;font-size:12px;font-family:'Liberation Sans',sans-serif;color:#000;transform:scaleX(0.9077);">sl_si91x_sysrtc__.slpb</span>
<svg style="left:36px;top:289px" width="16" height="16" viewBox="0 0 16 16"><path d="M2.5 1.5h6.5l2.5 2.5v10.5h-9z" fill="#f8f9fb" stroke="#8f8f9a" stroke-width="1"/><path d="M9 1.5v2.5h2.5z" fill="#dcc58e"/><path d="M4.5 5.5h4M4.5 7.5h5M4.5 9.5h5M4.5 11.5h5M4.5 13h4" stroke="#4d6fae" stroke-width=".8"/></svg>
<span class="t" style="left:56px;top:297px;font-size:12px;font-family:'Liberation Sans',sans-serif;color:#000;transform:scaleX(0.8961);">sl_si91x_sysrtc__.slps</span>
</div>
<div style="left:2px;top:727px;width:486px;height:407px;background:#ebebeb;border:1px solid #a3a3a3;border-radius:3px 3px 0 0;"></div>
<div style="left:117px;top:750px;width:370px;height:1px;background:#a3a3a3;"></div>
<div style="left:117px;top:729px;width:1px;height:22px;background:#a3a3a3;"></div>
<div style="left:206px;top:729px;width:1px;height:22px;background:#a3a3a3;"></div>
<div style="left:118px;top:728px;width:369px;height:1px;background:#f7f7f7;"></div>
<div style="left:3px;top:728px;width:114px;height:24px;background:linear-gradient(#ffffff,#ebebeb);"></div>
<div style="left:3px;top:728px;width:114px;height:2px;background:#7a7a7a;border-radius:2px 2px 0 0;"></div>
<svg style="left:7px;top:730px" width="16" height="16" viewBox="0 0 16 16"><rect x="0.5" y="1.5" width="8" height="10" fill="#5cbf55" stroke="#2c9a33"/><rect x="2" y="3" width="5" height="5" fill="#8a8a8a" stroke="#d0d0d0" stroke-width=".6" stroke-dasharray="1 .6"/><rect x="1" y="9.5" width="7" height="1.6" fill="#c8901a"/><path d="M1.5 12v2M3.5 12v2M5.5 12v2M7.5 12v2" stroke="#555" stroke-width=".9"/><path d="M11.5 0.5v15M11.5 1.5h2.5M11.5 8h2.5M11.5 14.5h2.5" stroke="#1b7fd6" stroke-width="1.4"/><path d="M9 8h2.5" stroke="#1b7fd6" stroke-width="1.4"/></svg>
<span class="t" style="left:26px;top:740px;font-size:12px;font-family:'Liberation Sans',sans-serif;color:#000;">No Adapters</span>
<svg style="left:101px;top:735px" width="10" height="10" viewBox="0 0 10 10"><path d="M0.5 0.5L9.5 9.5M9.5 0.5L0.5 9.5" stroke="#000" stroke-width="1"/></svg>
<svg style="left:123px;top:731px" width="16" height="16" viewBox="0 0 16 16"><rect x="0.5" y="1.5" width="4" height="4" fill="#dcebfb" stroke="#2f7ad0"/><rect x="0.5" y="10.5" width="4" height="4" fill="#dcebfb" stroke="#2f7ad0"/><path d="M7 3h6M9 8h4M7 13h6" stroke="#2f7ad0" stroke-width="1.2"/><rect x="6.5" y="6.5" width="2" height="2" fill="none" stroke="#2f7ad0"/></svg>
<span class="t" style="left:142px;top:740px;font-size:12px;font-family:'Liberation Sans',sans-serif;color:#000;transform:scaleX(1.0254);">Outline</span>
<svg style="left:444px;top:733px" width="11" height="5" viewBox="0 0 11 5"><rect x="0.65" y="0.65" width="8.7" height="2.7" fill="#fff" stroke="#000" stroke-width="1.3"/></svg>
<svg style="left:467px;top:733px" width="11" height="11" viewBox="0 0 11 11"><rect x="0.65" y="0.65" width="8.7" height="8.7" fill="#f2f2f2" stroke="#000" stroke-width="1.3"/><path d="M1.3 2.3h7.4" stroke="#000" stroke-width=".9"/></svg>
<svg style="left:220px;top:756px" width="16" height="16" viewBox="0 0 16 16"><path d="M2.5 6.5c0-3 2.5-5 6-4.5V0.5l4 3-4 3V5C6 4.6 5 5.5 5 7z" fill="#fbe08a" stroke="#c08a1a" stroke-width=".9"/><path d="M13.5 9.5c0 3-2.5 5-6 4.5v1.5l-4-3 4-3V11c2.5.4 3.5-.5 3.5-2z" fill="#fbe08a" stroke="#c08a1a" stroke-width=".9"/></svg>
<svg style="left:243px;top:756px" width="16" height="16" viewBox="0 0 16 16"><path d="M2.5 6.5c0-3 2.5-5 6-4.5V0.5l4 3-4 3V5C6 4.6 5 5.5 5 7z" fill="#fbe08a" stroke="#c08a1a" stroke-width=".9"/><path d="M13.5 9.5c0 3-2.5 5-6 4.5v1.5l-4-3 4-3V11c2.5.4 3.5-.5 3.5-2z" fill="#fbe08a" stroke="#c08a1a" stroke-width=".9"/><path d="M1.5 1.5l13 13M14.5 1.5l-13 13" stroke="#ee1c1c" stroke-width="2"/></svg>
<svg style="left:267px;top:756px" width="16" height="16" viewBox="0 0 16 16"><path d="M0.5 4.5h5l1 1.5h8v8.5h-14z" fill="#fcd98a" stroke="#c08a3a"/><path d="M12 0v6M9 3h6" stroke="#d9a534" stroke-width="1.6"/><path d="M12 1v4M10 3h4" stroke="#fff6c8"/></svg>
<svg style="left:290px;top:756px" width="16" height="16" viewBox="0 0 16 16"><rect x="1.5" y="1.5" width="11" height="13" fill="#f4f4f4" stroke="#b8b8b8"/><path d="M6 11l7-8 2 2-7 8-3 1z" fill="#a9a9a9"/></svg>
<svg style="left:313px;top:756px" width="16" height="16" viewBox="0 0 16 16"><path d="M3 5.5 5.5 3 8 5.5 10.5 3 13 5.5 10.5 8 13 10.5 10.5 13 8 10.5 5.5 13 3 10.5 5.5 8z" fill="#9c9c9c" stroke="#9c9c9c" stroke-width="1.5" stroke-linejoin="round"/></svg>
<svg style="left:336px;top:756px" width="16" height="16" viewBox="0 0 16 16"><path d="M3 2l10 12M13 2 3 14" stroke="#a0a0a0" stroke-width="2.2"/><circle cx="3.5" cy="13" r="2.2" fill="none" stroke="#a0a0a0" stroke-width="1.5"/><circle cx="12.5" cy="13" r="2.2" fill="none" stroke="#a0a0a0" stroke-width="1.5"/></svg>
<svg style="left:359px;top:756px" width="16" height="16" viewBox="0 0 16 16"><g fill="#2d62b0"><circle cx="8" cy="8" r="5.5"/><rect x="6.3" y="0" width="3.4" height="4" transform="rotate(0 8 8)"/><rect x="6.3" y="0" width="3.4" height="4" transform="rotate(45 8 8)"/><rect x="6.3" y="0" width="3.4" height="4" transform="rotate(90 8 8)"/><rect x="6.3" y="0" width="3.4" height="4" transform="rotate(135 8 8)"/><rect x="6.3" y="0" width="3.4" height="4" transform="rotate(180 8 8)"/><rect x="6.3" y="0" width="3.4" height="4" transform="rotate(225 8 8)"/><rect x="6.3" y="0" width="3.4" height="4" transform="rotate(270 8 8)"/><rect x="6.3" y="0" width="3.4" height="4" transform="rotate(315 8 8)"/></g><circle cx="8" cy="8" r="2.6" fill="#f0f0f0"/></svg>
<svg style="left:381px;top:763px" width="7" height="4" viewBox="0 0 7 4"><path d="M0 0h7l-3.5 4z" fill="#000"/></svg>
<svg style="left:397px;top:756px" width="16" height="16" viewBox="0 0 16 16"><rect x="0.5" y="1.5" width="14" height="13" fill="#f6f8fb" stroke="#4d6fa3"/><path d="M0.5 4.5h14" stroke="#4d6fa3" stroke-width="2"/><path d="M1 7.5h13M1 10h13M1 12.5h13M5.5 5v9" stroke="#9fb3d1"/></svg>
<svg style="left:420px;top:756px" width="16" height="16" viewBox="0 0 16 16"><path d="M0.5 0.5h9l2 2v13h-11z" fill="#f8f4e6" stroke="#c9a968"/><rect x="4.5" y="5.5" width="11" height="6" fill="#e6eef9" stroke="#4d6fa3"/><path d="M6 7.5h8M6 9.5h8" stroke="#4d6fa3"/><path d="M2 3h5M2 13h6" stroke="#7c9ccd"/></svg>
<svg style="left:443px;top:756px" width="16" height="16" viewBox="0 0 16 16"><rect x="0.5" y="0.5" width="11" height="11" fill="#f3f6fa" stroke="#9fb3d1"/><rect x="3.5" y="3.5" width="12" height="12" fill="#eef4fb" stroke="#5a7fb5"/><path d="M6 9.5h7" stroke="#1f4f8f" stroke-width="1.5"/></svg>
<svg style="left:466px;top:756px" width="16" height="16" viewBox="0 0 16 16"><rect x="0.5" y="0.5" width="11" height="11" fill="#f3f6fa" stroke="#9fb3d1"/><rect x="3.5" y="3.5" width="12" height="12" fill="#eef4fb" stroke="#5a7fb5"/><path d="M6 9.5h7M9.5 6v7" stroke="#1f4f8f" stroke-width="1.5"/></svg>
<div style="left:5px;top:775px;width:480px;height:356px;background:#ffffff;border:1px solid #7a7a7a;"></div>
<span class="t" style="left:3px;top:1145px;font-size:12px;font-family:'Liberation Sans',sans-serif;color:#000;transform:scaleX(0.9570);">0 items selected</span>
<div style="left:492px;top:65px;width:1426px;height:959px;background:#ebebeb;border:1px solid #a3a3a3;border-radius:3px 3px 0 0;"></div>
<div style="left:493px;top:88px;width:1424px;height:1px;background:#a3a3a3;"></div>
<div style="left:493px;top:67px;width:157px;height:1px;background:#f7f7f7;"></div>
<div style="left:761px;top:67px;width:1156px;height:1px;background:#f7f7f7;"></div>
<svg style="left:496px;top:70px" width="16" height="16" viewBox="0 0 16 16"><g fill="#1682d9"><rect x="4" y="1.5" width="3" height="2" rx=".8"/><rect x="9" y="1.5" width="3" height="2" rx=".8"/><rect x="3.5" y="3" width="9" height="5"/><rect x="1" y="7.5" width="2.5" height="2" rx=".8"/><rect x="12.5" y="7.5" width="2.5" height="2" rx=".8"/><rect x="0" y="9" width="7.7" height="5.5"/><rect x="8.3" y="9" width="7.7" height="5.5"/></g><path d="M8 8.5v6" stroke="#7fbdf0" stroke-width=".8"/></svg>
<span class="t" style="left:516px;top:78px;font-size:12px;font-family:'Liberation Sans',sans-serif;color:#000;transform:scaleX(0.9045);">sl_si91x_sysrtc__.slcp</span>
<div style="left:650px;top:66px;width:111px;height:23px;background:linear-gradient(#ffffff,#f3f3f3);"></div>
<div style="left:650px;top:66px;width:111px;height:2px;background:#7a7a7a;border-radius:2px 2px 0 0;"></div>
<div style="left:650px;top:68px;width:1px;height:21px;background:#a3a3a3;"></div>
<div style="left:760px;top:68px;width:1px;height:21px;background:#a3a3a3;"></div>
<svg style="left:656px;top:71px" width="16" height="16" viewBox="0 0 16 16"><rect x="0.5" y="0.5" width="11" height="12" fill="#f4f8fd" stroke="#8d7d52"/><rect x="1" y="1" width="10" height="2" fill="#6aa0dc"/></svg>
<span class="t" style="left:674px;top:78px;font-size:12px;font-family:'Liberation Sans',sans-serif;color:#000;transform:scaleX(0.9884);">readme.md</span>
<svg style="left:743px;top:73px" width="10" height="10" viewBox="0 0 10 10"><path d="M0.5 0.5L9.5 9.5M9.5 0.5L0.5 9.5" stroke="#000" stroke-width="1"/></svg>
<svg style="left:1874px;top:71px" width="11" height="5" viewBox="0 0 11 5"><rect x="0.65" y="0.65" width="8.7" height="2.7" fill="#fff" stroke="#000" stroke-width="1.3"/></svg>
<svg style="left:1897px;top:71px" width="11" height="11" viewBox="0 0 11 11"><rect x="0.65" y="0.65" width="8.7" height="8.7" fill="#f2f2f2" stroke="#000" stroke-width="1.3"/><path d="M1.3 2.3h7.4" stroke="#000" stroke-width=".9"/></svg>
<div style="left:493px;top:89px;width:1424px;height:934px;background:#efefef;"></div>
<div style="left:495px;top:90px;width:1403px;height:932px;background:#f8f8f8;"></div>
<div style="left:1898px;top:90px;width:18px;height:932px;background:#f0f0f0;"></div>
<div style="left:1900px;top:108px;width:13px;height:138px;background:#c1c1c1;"></div>
<svg style="left:1901px;top:96px" width="10" height="6" viewBox="0 0 10 6"><path d="M0.5 5.5 5 1l4.5 4.5z" fill="#a3a3a3"/></svg>
<svg style="left:1901px;top:1009px" width="10" height="6" viewBox="0 0 10 6"><path d="M0.5 0.5h9L5 5z" fill="#606060"/></svg>
<div class="clip" style="left:495px;top:90px;width:1403px;height:932px">
<span class="t" style="left:272px;top:37px;font-size:34px;font-family:'Liberation Sans',sans-serif;color:#1f2328;transform:scaleX(0.7751);-webkit-text-stroke:0.9px #1f2328;">SL SYSRTC</span>
<div style="left:272px;top:66px;width:860px;height:1px;background:#d8dee4;"></div>
<span class="t" style="left:272px;top:108px;font-size:24px;font-family:'Liberation Sans',sans-serif;color:#1f2328;-webkit-text-stroke:0.8px #1f2328;">Table of Contents</span>
<div style="left:272px;top:128px;width:860px;height:1px;background:#d8dee4;"></div>
<div style="left:286px;top:155px;width:6px;height:6px;background:#1f2328;border-radius:50%;"></div>
<span class="t" style="left:304px;top:157px;font-size:16px;font-family:'Liberation Sans',sans-serif;color:#0969da;transform:scaleX(0.8179);">SL SYSRTC</span>
<div style="left:317.5px;top:178.5px;width:7px;height:7px;background:transparent;border:1.3px solid #1f2328;border-radius:50%;"></div>
<span class="t" style="left:336px;top:182px;font-size:16px;font-family:'Liberation Sans',sans-serif;color:#0969da;transform:scaleX(0.9846);">Table of Contents</span>
<div style="left:317.5px;top:206.5px;width:7px;height:7px;background:transparent;border:1.3px solid #1f2328;border-radius:50%;"></div>
<span class="t" style="left:336px;top:210px;font-size:16px;font-family:'Liberation Sans',sans-serif;color:#0969da;transform:scaleX(0.9707);">Purpose/Scope</span>
<div style="left:317.5px;top:234.5px;width:7px;height:7px;background:transparent;border:1.3px solid #1f2328;border-radius:50%;"></div>
<span class="t" style="left:336px;top:238px;font-size:16px;font-family:'Liberation Sans',sans-serif;color:#0969da;transform:scaleX(0.9688);">Overview</span>
<div style="left:317.5px;top:262.5px;width:7px;height:7px;background:transparent;border:1.3px solid #1f2328;border-radius:50%;"></div>
<span class="t" style="left:336px;top:266px;font-size:16px;font-family:'Liberation Sans',sans-serif;color:#0969da;transform:scaleX(0.9762);">About Example Code</span>
<div style="left:317.5px;top:290.5px;width:7px;height:7px;background:transparent;border:1.3px solid #1f2328;border-radius:50%;"></div>
<span class="t" style="left:336px;top:294px;font-size:16px;font-family:'Liberation Sans',sans-serif;color:#0969da;transform:scaleX(0.9914);">If compare channel0 or compare channel1 is enabled through UC</span>
<div style="left:317.5px;top:318.5px;width:7px;height:7px;background:transparent;border:1.3px solid #1f2328;border-radius:50%;"></div>
<span class="t" style="left:336px;top:322px;font-size:16px;font-family:'Liberation Sans',sans-serif;color:#0969da;transform:scaleX(0.9908);">If capture channel0 is enabled through UC</span>
<div style="left:317.5px;top:346.5px;width:7px;height:7px;background:transparent;border:1.3px solid #1f2328;border-radius:50%;"></div>
<span class="t" style="left:336px;top:350px;font-size:16px;font-family:'Liberation Sans',sans-serif;color:#0969da;transform:scaleX(0.9908);">If no channels enabled through UC</span>
<div style="left:317.5px;top:374.5px;width:7px;height:7px;background:transparent;border:1.3px solid #1f2328;border-radius:50%;"></div>
<span class="t" style="left:336px;top:378px;font-size:16px;font-family:'Liberation Sans',sans-serif;color:#0969da;transform:scaleX(0.9767);">Prerequisites/Setup Requirements</span>
<div style="left:317.5px;top:402.5px;width:7px;height:7px;background:transparent;border:1.3px solid #1f2328;border-radius:50%;"></div>
<span class="t" style="left:336px;top:406px;font-size:16px;font-family:'Liberation Sans',sans-serif;color:#0969da;transform:scaleX(0.9757);">Hardware Requirements</span>
<div style="left:317.5px;top:430.5px;width:7px;height:7px;background:transparent;border:1.3px solid #1f2328;border-radius:50%;"></div>
<span class="t" style="left:336px;top:434px;font-size:16px;font-family:'Liberation Sans',sans-serif;color:#0969da;transform:scaleX(0.9761);">Software Requirements</span>
<div style="left:317.5px;top:458.5px;width:7px;height:7px;background:transparent;border:1.3px solid #1f2328;border-radius:50%;"></div>
<span class="t" style="left:336px;top:462px;font-size:16px;font-family:'Liberation Sans',sans-serif;color:#0969da;transform:scaleX(0.9792);">Setup Diagram</span>
<div style="left:317.5px;top:486.5px;width:7px;height:7px;background:transparent;border:1.3px solid #1f2328;border-radius:50%;"></div>
<span class="t" style="left:336px;top:490px;font-size:16px;font-family:'Liberation Sans',sans-serif;color:#0969da;transform:scaleX(0.9868);">Getting Started</span>
<div style="left:317.5px;top:514.5px;width:7px;height:7px;background:transparent;border:1.3px solid #1f2328;border-radius:50%;"></div>
<span class="t" style="left:336px;top:518px;font-size:16px;font-family:'Liberation Sans',sans-serif;color:#0969da;">Application Build Environment</span>
<div style="left:317.5px;top:542.5px;width:7px;height:7px;background:transparent;border:1.3px solid #1f2328;border-radius:50%;"></div>
<span class="t" style="left:336px;top:546px;font-size:16px;font-family:'Liberation Sans',sans-serif;color:#0969da;transform:scaleX(0.9515);">Macros for SYSRTC Configurations</span>
<div style="left:317.5px;top:570.5px;width:7px;height:7px;background:transparent;border:1.3px solid #1f2328;border-radius:50%;"></div>
<span class="t" style="left:336px;top:574px;font-size:16px;font-family:'Liberation Sans',sans-serif;color:#0969da;">Test the Application</span>
<span class="t" style="left:272px;top:626px;font-size:24px;font-family:'Liberation Sans',sans-serif;color:#1f2328;transform:scaleX(0.9811);-webkit-text-stroke:0.8px #1f2328;">Purpose/Scope</span>
<div style="left:272px;top:646px;width:860px;height:1px;background:#d8dee4;"></div>
<div style="left:286px;top:673px;width:6px;height:6px;background:#1f2328;border-radius:50%;"></div>
<span class="t" style="left:304px;top:676px;font-size:16px;font-family:'Liberation Sans',sans-serif;color:#1f2328;">This application demonstrates toggling an LED five times at 1-second intervals and then stops the timer.</span>
<div style="left:317.5px;top:696.5px;width:7px;height:7px;background:transparent;border:1.3px solid #1f2328;border-radius:50%;"></div>
<span class="t" style="left:336px;top:700px;font-size:16px;font-family:'Liberation Sans',sans-serif;color:#1f2328;transform:scaleX(0.9659);">LED0 for ACx Module boards and LED1 for ICs</span>
<span class="t" style="left:272px;top:752px;font-size:24px;font-family:'Liberation Sans',sans-serif;color:#1f2328;transform:scaleX(0.9938);-webkit-text-stroke:0.8px #1f2328;">Overview</span>
<div style="left:272px;top:772px;width:860px;height:1px;background:#d8dee4;"></div>
<div style="left:286px;top:799px;width:6px;height:6px;background:#1f2328;border-radius:50%;"></div>
<span class="t" style="left:304px;top:802px;font-size:16px;font-family:'Liberation Sans',sans-serif;color:#1f2328;transform:scaleX(0.9644);">The SYSRTC (System Real Time Clock) is a highly configurable RTC capable of serving multiple cores. It contains up to</span>
<span class="t" style="left:304px;top:826px;font-size:16px;font-family:'Liberation Sans',sans-serif;color:#1f2328;">2 groups, where the number of compare- and capture-channels within each group is parameterized individually. Each</span>
<span class="t" style="left:304px;top:850px;font-size:16px;font-family:'Liberation Sans',sans-serif;color:#1f2328;">group has it's own interrupt- and configuration-registers. The main idea is to save power by letting all groups share a</span>
<span class="t" style="left:304px;top:874px;font-size:16px;font-family:'Liberation Sans',sans-serif;color:#1f2328;">single counter.</span>
<div style="left:286px;top:899px;width:6px;height:6px;background:#1f2328;border-radius:50%;"></div>
<span class="t" style="left:304px;top:902px;font-size:16px;font-family:'Liberation Sans',sans-serif;color:#1f2328;transform:scaleX(0.9886);">Counter - The counter is shared between all groups. It can be started/stopped by writing to START/STOP fields in</span>
<span class="t" style="left:304px;top:926px;font-size:16px;font-family:'Liberation Sans',sans-serif;color:#1f2328;transform:scaleX(0.9903);">CMD register. RUNNING field in STATUS register indicates if counter is running or not. By default, counter will halt</span>
</div>
<div style="left:492px;top:1028px;width:1426px;height:106px;background:#ebebeb;border:1px solid #a3a3a3;border-bottom:none;border-radius:3px 3px 0 0;"></div>
<div style="left:493px;top:1051px;width:1424px;height:1px;background:#a3a3a3;"></div>
<div style="left:493px;top:1029px;width:308px;height:1px;background:#f7f7f7;"></div>
<div style="left:894px;top:1029px;width:1023px;height:1px;background:#f7f7f7;"></div>
<div style="left:592px;top:1030px;width:1px;height:21px;background:#a3a3a3;"></div>
<div style="left:677px;top:1030px;width:1px;height:21px;background:#a3a3a3;"></div>
<svg style="left:496px;top:1033px" width="16" height="16" viewBox="0 0 16 16"><rect x="0.5" y="0.5" width="12" height="14" fill="#f4f6fa" stroke="#5a6f9a"/><circle cx="5" cy="4.5" r="2.8" fill="#e02828"/><path d="M2 14l3-5 3 5z" fill="#f0a020"/><path d="M9 2c2 2 2 10 0 12" stroke="#7d93b1" fill="none"/></svg>
<span class="t" style="left:516px;top:1041px;font-size:12px;font-family:'Liberation Sans',sans-serif;color:#000;transform:scaleX(0.9864);">Problems</span>
<svg style="left:596px;top:1033px" width="16" height="16" viewBox="0 0 16 16"><path d="M3 14l-2 1 1-2 8-9 3 3z" fill="#f8e0a0" stroke="#c8901e"/><path d="M10 3l3-2 2 2-2 3z" fill="#e6c06a" stroke="#a07818"/><path d="M2 12c1-2 3-3 5-1" fill="#ccc" stroke="#888"/></svg>
<span class="t" style="left:615px;top:1041px;font-size:12px;font-family:'Liberation Sans',sans-serif;color:#000;transform:scaleX(0.9467);">Search</span>
<svg style="left:681px;top:1033px" width="16" height="16" viewBox="0 0 16 16"><path d="M1 3h5M1 13h5M6 8h5M4 1v4M4 11v4M9 6v4" stroke="#6d6d6d"/><circle cx="7.5" cy="3" r="2.5" fill="#5ab05a" stroke="#2f8a2f"/><circle cx="7.5" cy="13" r="2.5" fill="#5ab05a" stroke="#2f8a2f"/><circle cx="12.5" cy="8" r="2.5" fill="#5ab05a" stroke="#2f8a2f"/></svg>
<span class="t" style="left:701px;top:1041px;font-size:12px;font-family:'Liberation Sans',sans-serif;color:#000;transform:scaleX(0.9818);">Call Hierarchy</span>
<div style="left:801px;top:1029px;width:93px;height:23px;background:linear-gradient(#ffffff,#f3f3f3);"></div>
<div style="left:801px;top:1029px;width:93px;height:2px;background:#7a7a7a;border-radius:2px 2px 0 0;"></div>
<div style="left:801px;top:1031px;width:1px;height:20px;background:#a3a3a3;"></div>
<div style="left:893px;top:1031px;width:1px;height:20px;background:#a3a3a3;"></div>
<svg style="left:807px;top:1033px" width="16" height="16" viewBox="0 0 16 16"><rect x="0.5" y="0.5" width="12" height="10" rx="1.5" fill="#dbe8f8" stroke="#2f5ea8" stroke-width="1.3"/><path d="M3 4h6M3 6.5h4" stroke="#2f5ea8"/><path d="M6.5 11v2M2 14h9" stroke="#2f5ea8" stroke-width="1.5"/></svg>
<span class="t" style="left:825px;top:1041px;font-size:12px;font-family:'Liberation Sans',sans-serif;color:#000;transform:scaleX(0.9764);">Console</span>
<svg style="left:877px;top:1036px" width="10" height="10" viewBox="0 0 10 10"><path d="M0.5 0.5L9.5 9.5M9.5 0.5L0.5 9.5" stroke="#000" stroke-width="1"/></svg>
<svg style="left:1695px;top:1032px" width="16" height="16" viewBox="0 0 16 16"><path d="M0.5 0.5h8l2 2v10h-10z" fill="#f8f8f8" stroke="#9a9a9a"/><path d="M2 3.5h6M2 5.5h6M2 7.5h6M2 9.5h5" stroke="#7c9ccd" stroke-width=".9"/><path d="M9 10l5 5M14 10l-5 5" stroke="#707070" stroke-width="1.8"/></svg>
<svg style="left:1718px;top:1032px" width="16" height="16" viewBox="0 0 16 16"><rect x="10.5" y="0.5" width="5" height="15" fill="#e6eef9" stroke="#7c9ccd"/><path d="M13 2v2M13 7v2M13 12v2" stroke="#2f5ea8" stroke-width="1.5"/><rect x="0.5" y="8.5" width="8" height="7" fill="#f8d060" stroke="#b08020"/><path d="M2.5 8.5V6a2 2 0 0 1 4 0v2.5" fill="none" stroke="#b08020" stroke-width="1.3"/><rect x="5.5" y="0.5" width="4" height="7" fill="#f0f0f0" stroke="#aaa"/></svg>
<svg style="left:1742px;top:1032px" width="16" height="16" viewBox="0 0 16 16"><path d="M0.5 0.5h10l2 2v12h-12z" fill="#f8f8f8" stroke="#9a9a9a"/><path d="M2 3.5h7M2 5.5h7M2 7.5h5" stroke="#7c9ccd" stroke-width=".9"/><path d="M10 6h3a2 2 0 0 1 0 5H7" fill="none" stroke="#d39020" stroke-width="1.8"/><path d="M8 9l-3 2 3 2z" fill="#d39020"/></svg>
<div style="left:1764px;top:1031px;width:1px;height:18px;background:#8a8a8a;"></div>
<svg style="left:1774px;top:1032px" width="16" height="16" viewBox="0 0 16 16"><rect x="0.5" y="3.5" width="13" height="11" fill="#e4effa" stroke="#7c8899"/><rect x="1" y="4" width="12" height="2" fill="#3c8ad6"/><path d="M8 9l3-3" stroke="#2a7a2a" stroke-width="1.5"/><circle cx="12.5" cy="3.5" r="2.8" fill="#3fa34d"/></svg>
<svg style="left:1797px;top:1032px" width="16" height="16" viewBox="0 0 16 16"><rect x="0.5" y="0.5" width="13" height="10" fill="#f4f4f4" stroke="#aaa"/><path d="M3 4h8M3 6.5h6" stroke="#bbb"/><path d="M7 11v2M3 14h8" stroke="#aaa" stroke-width="1.5"/></svg>
<svg style="left:1819px;top:1038px" width="7" height="4" viewBox="0 0 7 4"><path d="M0 0h7l-3.5 4z" fill="#8a8a8a"/></svg>
<svg style="left:1835px;top:1032px" width="16" height="16" viewBox="0 0 16 16"><rect x="0.5" y="3.5" width="13" height="11" fill="#eef6fd" stroke="#9b8650"/><rect x="1" y="4" width="12" height="2" fill="#4d8fd6"/><path d="M13 11c-1 3-5 3.5-9 3.5" fill="none" stroke="#f3dfa0" stroke-width="1.2"/><path d="M12 0.5 13.2 3 15.5 4 13.2 5 12 7.5 10.8 5 8.5 4 10.8 3z" fill="#fff8d8" stroke="#d3a02e" stroke-width=".9"/></svg>
<svg style="left:1857px;top:1038px" width="7" height="4" viewBox="0 0 7 4"><path d="M0 0h7l-3.5 4z" fill="#000"/></svg>
<svg style="left:1874px;top:1034px" width="11" height="5" viewBox="0 0 11 5"><rect x="0.65" y="0.65" width="8.7" height="2.7" fill="#fff" stroke="#000" stroke-width="1.3"/></svg>
<svg style="left:1897px;top:1034px" width="11" height="11" viewBox="0 0 11 11"><rect x="0.65" y="0.65" width="8.7" height="8.7" fill="#f2f2f2" stroke="#000" stroke-width="1.3"/><path d="M1.3 2.3h7.4" stroke="#000" stroke-width=".9"/></svg>
<div style="left:493px;top:1052px;width:1424px;height:81px;background:#f0f0f0;"></div>
<div style="left:495px;top:1053px;width:1406px;height:17px;background:#ffffff;"></div>
<span class="t" style="left:495px;top:1062px;font-size:12px;font-family:'Liberation Sans',sans-serif;color:#333333;transform:scaleX(0.9713);">Adapter Pack Console</span>
<div style="left:495px;top:1069px;width:1406px;height:1px;background:#a0a0a0;"></div>
<div style="left:495px;top:1070px;width:1403px;height:46px;background:#ffffff;"></div>
<div style="left:1898px;top:1070px;width:18px;height:46px;background:#f0f0f0;"></div>
<svg style="left:1901px;top:1076px" width="10" height="6" viewBox="0 0 10 6"><path d="M1 5.5 5 1.5l4 4" fill="none" stroke="#606060" stroke-width="1.6"/></svg>
<svg style="left:1901px;top:1103px" width="10" height="6" viewBox="0 0 10 6"><path d="M1 0.5 5 4.5l4-4" fill="none" stroke="#606060" stroke-width="1.6"/></svg>
<div style="left:495px;top:1116px;width:1403px;height:16px;background:#f0f0f0;"></div>
<div style="left:512px;top:1117px;width:828px;height:14px;background:#cdcdcd;"></div>
<svg style="left:500px;top:1119px" width="8" height="10" viewBox="0 0 8 10"><path d="M5.5 1.5 2 5l3.5 3.5" fill="none" stroke="#606060" stroke-width="1.6"/></svg>
<svg style="left:1886px;top:1119px" width="8" height="10" viewBox="0 0 8 10"><path d="M2.5 1.5 6 5 2.5 8.5" fill="none" stroke="#606060" stroke-width="1.6"/></svg>
<span class="t" style="left:497px;top:1079px;font-size:12.5px;font-family:'Liberation Mono',monospace;color:#333;transform:scaleX(0.9336);">CRC</span>
<span class="t" style="left:665px;top:1079px;font-size:12.5px;font-family:'Liberation Mono',monospace;color:#333;transform:scaleX(0.9336);">: 0x7420B63E (1948300862)</span>
<span class="t" style="left:497px;top:1094px;font-size:12.5px;font-family:'Liberation Mono',monospace;color:#333;transform:scaleX(0.9336);">Encrypted</span>
<span class="t" style="left:665px;top:1094px;font-size:12.5px;font-family:'Liberation Mono',monospace;color:#333;transform:scaleX(0.9336);">: No</span>
<span class="t" style="left:497px;top:1109px;font-size:12.5px;font-family:'Liberation Mono',monospace;color:#333;transform:scaleX(0.9336);">Signed</span>
<span class="t" style="left:665px;top:1109px;font-size:12.5px;font-family:'Liberation Mono',monospace;color:#333;transform:scaleX(0.9336);">: No</span>
<svg style="left:1634px;top:1139px" width="3" height="18" viewBox="0 0 3 18"><rect x="1" y="1" width="1" height="1" fill="#a0a0a0"/><rect x="1" y="4" width="1" height="1" fill="#a0a0a0"/><rect x="1" y="7" width="1" height="1" fill="#a0a0a0"/><rect x="1" y="10" width="1" height="1" fill="#a0a0a0"/><rect x="1" y="13" width="1" height="1" fill="#a0a0a0"/><rect x="1" y="16" width="1" height="1" fill="#a0a0a0"/></svg>
</body></html>
